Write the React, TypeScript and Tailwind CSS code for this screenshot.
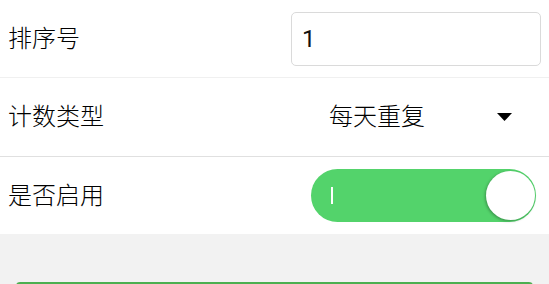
import React from "react";

export default function App() {
  const font = { fontFamily: '"Roboto", "Noto Sans CJK SC", sans-serif' };
  return (
    <div className="w-[549px] h-[284px] overflow-hidden bg-[#f2f2f2]" style={font}>
      <div className="bg-white">
        <div className="h-[78px] flex items-center justify-between pl-[8px] pr-[8px] border-b border-[#f0f0f0]">
          <span className="text-[24px] leading-none font-light text-[#000]">排序号</span>
          <div className="w-[250px] h-[54px] border border-[#dadada] rounded-[5px] flex items-center pl-[10px] text-[24px] text-[#111] leading-none">
            1
          </div>
        </div>
        <div className="h-[79px] flex items-center justify-between pl-[8px] pr-[8px] border-b border-[#e0e0e0]">
          <span className="text-[24px] leading-none font-light text-[#000]">计数类型</span>
          <div className="w-[250px] flex items-center pl-[38px] pr-[29px]">
            <span className="text-[24px] leading-none font-light text-[#000]">每天重复</span>
            <svg className="ml-auto" width="15" height="8" viewBox="0 0 15 8">
              <path d="M0 0H15L7.5 8Z" fill="#000" />
            </svg>
          </div>
        </div>
        <div className="h-[77px] flex items-center justify-between pl-[8px] pr-[8px]">
          <span className="text-[24px] leading-none font-light text-[#000]">是否启用</span>
          <div className="mr-[5px] w-[225px] h-[53px] rounded-full bg-[#53d36b] flex items-center pl-[20px] pr-[1px]">
            <div className="w-[1.5px] h-[17px] bg-white" />
            <div className="ml-auto w-[49px] h-[49px] rounded-full bg-white shadow-[-1px_1px_3px_rgba(0,0,0,0.3)]" />
          </div>
        </div>
      </div>
      <div className="pt-[48px] px-[16px]">
        <div className="h-[50px] rounded-[4px] bg-[#4caf50]" />
      </div>
    </div>
  );
}
